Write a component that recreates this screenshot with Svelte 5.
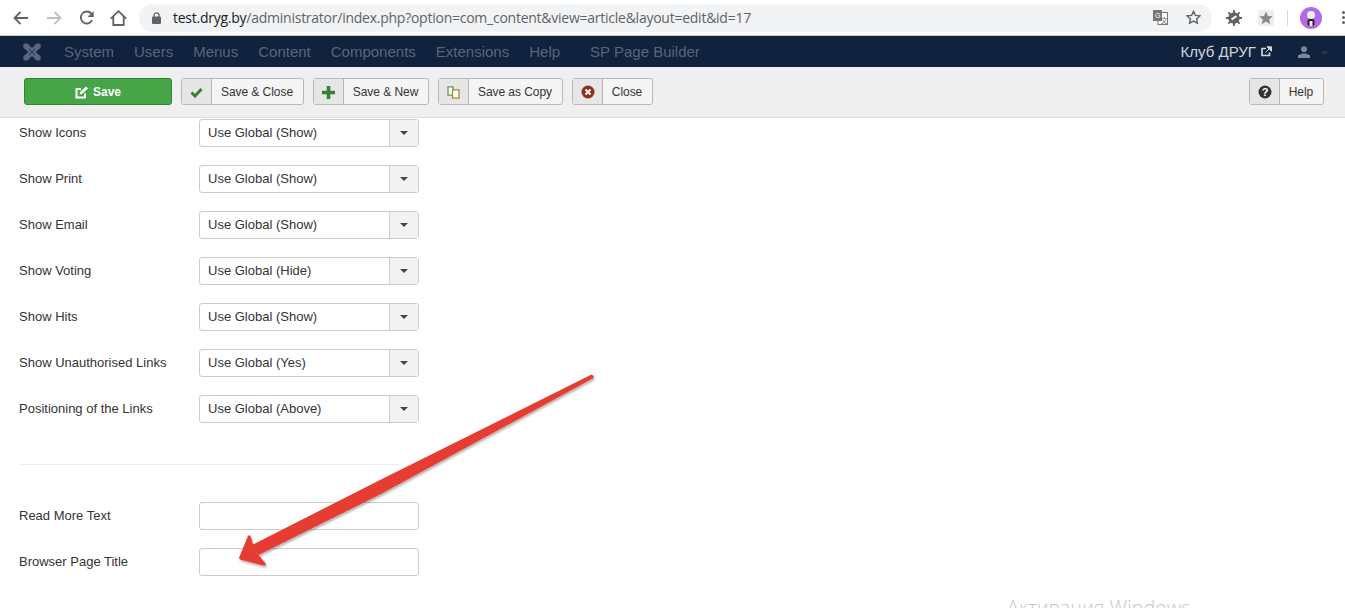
<script lang="ts">
	const navItems = ['System', 'Users', 'Menus', 'Content', 'Components', 'Extensions', 'Help'];

	const toolButtons = [
		{ label: 'Save & Close', icon: 'check', width: 123 },
		{ label: 'Save & New', icon: 'plus', width: 116 },
		{ label: 'Save as Copy', icon: 'copy', width: 125 },
		{ label: 'Close', icon: 'cancel', width: 81 }
	];

	const selectRows = [
		{ label: 'Show Icons', value: 'Use Global (Show)' },
		{ label: 'Show Print', value: 'Use Global (Show)' },
		{ label: 'Show Email', value: 'Use Global (Show)' },
		{ label: 'Show Voting', value: 'Use Global (Hide)' },
		{ label: 'Show Hits', value: 'Use Global (Show)' },
		{ label: 'Show Unauthorised Links', value: 'Use Global (Yes)' },
		{ label: 'Positioning of the Links', value: 'Use Global (Above)' }
	];

	const textRows = ['Read More Text', 'Browser Page Title'];
</script>

<div class="page">
	<header class="chrome">
		<div class="chrome-nav">
			<svg class="c-back" width="16" height="14" viewBox="0 0 16 14"><path d="M15 7H2M7.5 1 1.500 7l6 6" fill="none" stroke="#5f6368" stroke-width="1.800" /></svg>
			<svg class="c-forward" width="16" height="14" viewBox="0 0 16 14"><path d="M1 7h13M8.500 1l6 6-6 6" fill="none" stroke="#bcbfc3" stroke-width="1.800" /></svg>
			<svg class="c-reload" width="16" height="16" viewBox="0 0 16 16"><path d="M13.200 10.200A6 6 0 1 1 12.400 3.600" fill="none" stroke="#5f6368" stroke-width="1.800" /><path d="M14.600 1v6h-6z" fill="#5f6368" /></svg>
			<svg class="c-home" width="17" height="16" viewBox="0 0 17 16"><path d="M.8 8.600 8.500 1.200l7.700 7.400M3.300 6.800v8.200h10.400V6.800" fill="none" stroke="#5f6368" stroke-width="1.800" /></svg>
		</div>
		<div class="omnibox">
			<svg class="lock" width="9" height="12" viewBox="0 0 9 12"><path d="M2 5V3.400a2.500 2.500 0 0 1 5 0V5" fill="none" stroke="#5f6368" stroke-width="1.300" /><rect y="4.600" width="9" height="7.400" rx="1" fill="#5f6368" /></svg>
			<span class="url"><b>test.dryg.by</b>/administrator/index.php?option=com_content&amp;view=article&amp;layout=edit&amp;id=17</span>
			<svg class="translate" width="15" height="15" viewBox="0 0 15 15"><rect x="5" y="2.500" width="9.500" height="12" fill="#fff" stroke="#777" /><rect width="9" height="11" fill="#777" /><text x="2" y="8" font-size="7" fill="#fff" font-family="Liberation Sans">G</text><text x="8" y="12.500" font-size="6.500" fill="#666" font-family="Noto Sans CJK SC">文</text></svg>
			<svg class="star" width="15" height="15" viewBox="0 0 15 15"><path d="m7.500 1.400 1.900 4 4.400.5-3.200 3 .8 4.300-3.900-2.100-3.900 2.100.8-4.300-3.200-3 4.400-.5z" fill="none" stroke="#5f6368" stroke-width="1.400" /></svg>
		</div>
		<div class="chrome-ext">
			<svg width="16" height="16" viewBox="0 0 16 16"><circle cx="8" cy="8" r="5.800" fill="#5f6368" /><path d="M8 0v16M0 8h16M2.300 2.300l11.400 11.400M13.700 2.300 2.300 13.700" stroke="#5f6368" stroke-width="1.800" /><path d="M5.500 9.500 10.500 6" stroke="#fff" stroke-width="2" /></svg>
			<svg class="ext-star" width="16" height="16" viewBox="0 0 16 16"><rect width="16" height="16" rx="3" fill="#eee" /><path d="m8 1.500 2 4.400 4.700.5-3.500 3.200 1 4.700L8 11.400l-4.200 2.900 1-4.700L1.300 6.400 6 5.900z" fill="#8a8a8a" /></svg>
			<span class="ext-sep"></span>
			<svg class="avatar" width="22" height="22" viewBox="0 0 22 22"><circle cx="11" cy="11" r="11" fill="#b36ae2" /><circle cx="11" cy="8" r="4" fill="#eee" /><rect x="7.500" y="12" width="7" height="7" rx="2" fill="#222" /><rect x="9.500" y="14" width="3" height="5" fill="#eee" /></svg>
			<span class="dots"><i></i><i></i><i></i></span>
		</div>
	</header>

	<nav class="navbar">
		<svg class="joomla" width="18" height="18" viewBox="0 0 18 18">
			<path d="M3.500 3.500 14.500 14.500M14.500 3.500 3.500 14.500" stroke="#59657a" stroke-width="5.600" />
			<circle cx="3.200" cy="3.200" r="3" fill="#59657a" /><circle cx="14.800" cy="3.200" r="3" fill="#59657a" />
			<circle cx="3.200" cy="14.800" r="3" fill="#59657a" /><circle cx="14.800" cy="14.800" r="3" fill="#59657a" />
			<path d="M6 6l6 6M12 6l-6 6" stroke="#10223e" stroke-width="1" opacity="0.7" />
		</svg>
		<ul class="menu">
			{#each navItems as item}
				<li>{item}</li>
			{/each}
		</ul>
		<span class="sp-builder">SP Page Builder</span>
		<span class="site-link">
			Клуб ДРУГ
			<svg width="11" height="11" viewBox="0 0 11 11"><path d="M8.500 6.500V9.500H1V2.500H5" fill="none" stroke="#d2d6dc" stroke-width="1.700" /><path d="M4.500 6.500 9 2M6 .8h4.500v4.500z" fill="#d2d6dc" stroke="#d2d6dc" /></svg>
		</span>
		<svg class="user" width="12" height="12" viewBox="0 0 12 12"><circle cx="6" cy="3.200" r="3" fill="#7d8797" /><path d="M0 12V9.500L4 7.500h4l4 2V12z" fill="#7d8797" /></svg>
		<span class="user-caret"></span>
	</nav>

	<div class="toolbar">
		<button class="btn-save" type="button">
			<svg width="13" height="13" viewBox="0 0 13 13"><path d="M10 7.500V11.500H1.500V3H6" fill="none" stroke="#fff" stroke-width="2" /><path d="M4.500 8.500 5 6l6-5.500 2 2L7 8z" fill="#fff" /></svg>
			Save
		</button>
		{#each toolButtons as btn}
			<button class="btn-tool" type="button" style="width: {btn.width}px">
				<span class="btn-icon">
					{#if btn.icon === 'check'}
						<svg width="13" height="11" viewBox="0 0 13 11"><path d="M1.500 5.500 5 9l6.500-7" fill="none" stroke="#378137" stroke-width="3" /></svg>
					{:else if btn.icon === 'plus'}
						<svg width="13" height="13" viewBox="0 0 13 13"><path d="M6.500 0v13M0 6.500h13" stroke="#378137" stroke-width="3.600" /></svg>
					{:else if btn.icon === 'copy'}
						<svg width="13" height="13" viewBox="0 0 13 13"><path d="M1 .8h5v8.400H1z" fill="#fff" stroke="#5f9c4a" stroke-width="1.300" /><path d="M5.500 3.800h6.500v8.400H5.500z" fill="#fff" stroke="#a8892e" stroke-width="1.300" /></svg>
					{:else}
						<svg width="14" height="14" viewBox="0 0 14 14"><circle cx="7" cy="7" r="6.500" fill="#942a25" /><path d="M4.500 4.500l5 5M9.500 4.500l-5 5" stroke="#fff" stroke-width="2" /></svg>
					{/if}
				</span>
				<span class="btn-label">{btn.label}</span>
			</button>
		{/each}
		<button class="btn-tool btn-help" type="button">
			<span class="btn-icon">
				<svg width="14" height="14" viewBox="0 0 14 14"><circle cx="7" cy="7" r="6.500" fill="#333" /><text x="7" y="10.800" text-anchor="middle" font-size="11" font-weight="700" fill="#fff" font-family="Liberation Sans">?</text></svg>
			</span>
			<span class="btn-label">Help</span>
		</button>
	</div>

	<main class="content">
		{#each selectRows as row}
			<div class="row">
				<span class="row-label">{row.label}</span>
				<div class="select">
					<span class="select-value">{row.value}</span>
					<span class="select-arrow"><i></i></span>
				</div>
			</div>
		{/each}

		<hr />

		{#each textRows as label}
			<div class="row">
				<span class="row-label">{label}</span>
				<div class="text-input"></div>
			</div>
		{/each}
	</main>

	<svg class="arrow" width="370" height="210" viewBox="230 370 370 210">
		<defs>
			<filter id="arrow-shadow" x="-5%" y="-5%" width="110%" height="110%">
				<feDropShadow dx="1" dy="2" stdDeviation="1" flood-color="#000" flood-opacity="0.3" />
			</filter>
		</defs>
		<path
			d="M591.500 374.500 Q594.500 375.500 593.500 378 L380 494.500 L258.500 555 L266 564 Q266 566 263 565.500 L240 559.500 Q238.500 558.500 239.500 556.500 L248 536 Q249.500 534.500 250.500 536 L253 544.500 L380 480 Z"
			fill="#e53e30"
			filter="url(#arrow-shadow)"
		/>
	</svg>

	<span class="watermark">Активация Windows</span>
</div>

<style>
	:global(body) {
		margin: 0;
		overflow: hidden;
	}

	.page {
		position: relative;
		height: 608px;
		overflow: hidden;
		background: #fff;
		color: #333;
		font-family: 'Liberation Sans', Arial, sans-serif;
		font-size: 13px;
	}

	.chrome {
		display: flex;
		align-items: center;
		height: 35px;
		border-bottom: 1px solid #d0d2d4;
		background: #fff;
	}

	.chrome-nav {
		display: flex;
		align-items: center;
		width: 139px;
		flex: none;
		padding-left: 13px;
		box-sizing: border-box;
	}

	.c-forward {
		margin-left: 17px;
	}

	.c-reload {
		margin-left: 17px;
	}

	.c-home {
		margin-left: 15px;
	}

	.omnibox {
		display: flex;
		align-items: center;
		width: 1073px;
		height: 28px;
		flex: none;
		box-sizing: border-box;
		padding-left: 13px;
		border-radius: 14px;
		background: #f1f3f4;
	}

	.url {
		margin-left: 12px;
		color: #5f6368;
		font-family: 'Open Sans', sans-serif;
		font-size: 14px;
		letter-spacing: -0.25px;
		white-space: nowrap;
	}

	.url b {
		color: #202124;
		font-weight: 400;
	}

	.translate {
		margin-left: auto;
	}

	.star {
		margin-left: 18px;
		margin-right: 11px;
	}

	.chrome-ext {
		display: flex;
		align-items: center;
		flex: 1;
		padding-left: 14px;
	}

	.ext-star {
		margin-left: 16px;
	}

	.ext-sep {
		width: 1px;
		height: 16px;
		margin-left: 13px;
		background: #d6d8da;
	}

	.avatar {
		margin-left: 12px;
		flex: none;
	}

	.dots {
		display: flex;
		flex-direction: column;
		gap: 2px;
		margin-left: 20px;
	}

	.dots i {
		width: 3px;
		height: 3px;
		border-radius: 50%;
		background: #5f6368;
	}

	.navbar {
		display: flex;
		align-items: center;
		height: 31px;
		background: #10223e;
		color: #59657a;
		font-size: 15px;
	}

	.joomla {
		margin-left: 23px;
		flex: none;
	}

	.menu {
		display: flex;
		gap: 20px;
		margin: 0 0 0 23px;
		padding: 0;
		list-style: none;
	}

	.sp-builder {
		margin-left: 30px;
	}

	.site-link {
		display: flex;
		align-items: center;
		gap: 5px;
		margin-left: auto;
		color: #d2d6dc;
		font-size: 15px;
	}

	.user {
		margin-left: 26px;
	}

	.user-caret {
		width: 0;
		height: 0;
		margin: 2px 16px 0 11px;
		border-top: 4px solid #27364f;
		border-left: 4px solid transparent;
		border-right: 4px solid transparent;
	}

	.toolbar {
		display: flex;
		align-items: center;
		gap: 9px;
		height: 48px;
		padding: 0 21px 2px 24px;
		border-bottom: 1px solid #dcdcdc;
		background: #efefef;
	}

	button {
		display: flex;
		align-items: center;
		height: 27px;
		padding: 0;
		border-radius: 3px;
		font-family: inherit;
		font-size: 12px;
	}

	.btn-save {
		justify-content: center;
		gap: 5px;
		width: 148px;
		padding-top: 2px;
		border: 1px solid #378137;
		background: #46a546;
		color: #fff;
		font-weight: 700;
	}

	.btn-tool {
		border: 1px solid #b8b8b8;
		background: #f5f5f5;
		color: #333;
	}

	.btn-icon {
		display: flex;
		align-items: center;
		justify-content: center;
		width: 29px;
		height: 100%;
		flex: none;
		border-right: 1px solid #b8b8b8;
		background: #e6e6e6;
	}

	.btn-icon svg {
		margin-top: 2px;
	}

	.btn-label {
		flex: 1;
		padding: 2px 1px 0 0;
		text-align: center;
		letter-spacing: -0.05px;
	}

	.btn-help {
		width: 75px;
		margin-left: auto;
	}

	.content {
		padding: 1px 19px 0;
	}

	.row {
		display: flex;
		align-items: center;
		height: 28px;
		margin-bottom: 18px;
	}

	.row-label {
		width: 180px;
		flex: none;
		padding-bottom: 2px;
		font-size: 13px;
	}

	.select,
	.text-input {
		display: flex;
		width: 220px;
		height: 28px;
		box-sizing: border-box;
		border: 1px solid #ccc;
		border-radius: 3px;
		background: #fff;
	}

	.select-value {
		flex: 1;
		padding-left: 8px;
		font-size: 13px;
		line-height: 25px;
	}

	.select-arrow {
		display: flex;
		align-items: center;
		justify-content: center;
		width: 28px;
		border-left: 1px solid #ccc;
		background: #f2f2f2;
	}

	.select-arrow i {
		width: 0;
		height: 0;
		border-top: 4px solid #444;
		border-left: 4px solid transparent;
		border-right: 4px solid transparent;
	}

	hr {
		width: 380px;
		height: 1px;
		margin: 41px 0 37px;
		border: 0;
		background: #eee;
	}

	.arrow {
		position: absolute;
		left: 230px;
		top: 370px;
		pointer-events: none;
	}

	.watermark {
		position: absolute;
		left: 1007px;
		top: 594px;
		color: #c6c6c6;
		font-family: 'Open Sans', sans-serif;
		font-size: 19.8px;
		font-weight: 300;
		white-space: nowrap;
	}
</style>
